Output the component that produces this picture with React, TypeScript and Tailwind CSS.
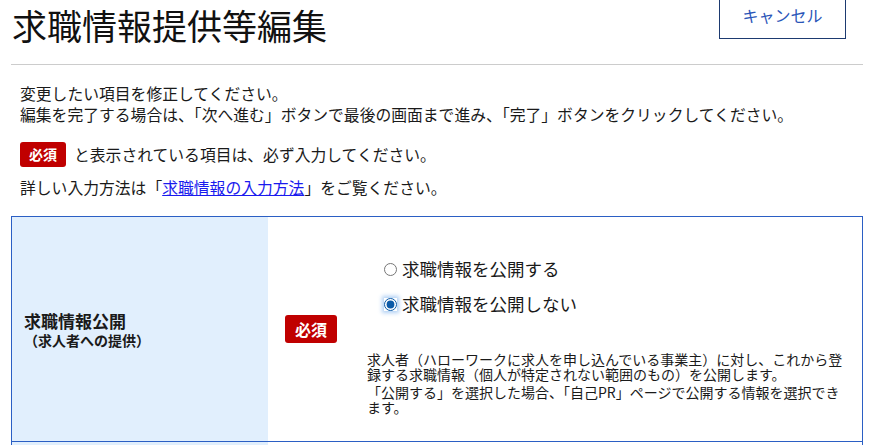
import React, { useState } from 'react';

const jp = { fontFamily: '"Noto Sans CJK JP", "Noto Sans", sans-serif' };

function RequiredBadge({ big }: { big?: boolean }) {
  return (
    <span
      className={
        big
          ? 'inline-flex h-[28px] w-[52px] items-center justify-center rounded-[3px] bg-[#c00000] text-[16px] font-bold text-white'
          : 'inline-flex h-[25px] w-[46px] items-center justify-center rounded-[3px] bg-[#c00000] text-[14px] font-bold text-white'
      }
    >
      必須
    </span>
  );
}

export default function App() {
  const [publish, setPublish] = useState('no');

  return (
    <div className="min-h-[445px] bg-white text-[#1a1a1a]" style={jp}>
      {/* header */}
      <div className="ml-[11px] mr-[16px] flex items-start justify-between border-b border-[#cccccc] pb-[16px]">
        <h1 className="pl-[1px] pt-[2px] text-[35px] leading-[46px] font-normal text-[#111]">
          求職情報提供等編集
        </h1>
        <button className="mr-[17px] -mt-[10px] h-[49px] w-[127px] border border-[#1d3a70] bg-white text-[16px] text-[#2a55b8]">
          キャンセル
        </button>
      </div>

      {/* intro */}
      <div className="px-[20px] pt-[18px] text-[15.8px] leading-[21px]">
        <p>変更したい項目を修正してください。</p>
        <p>編集を完了する場合は、「次へ進む」ボタンで最後の画面まで進み、「完了」ボタンをクリックしてください。</p>
        <div className="mt-[17px] flex items-center gap-[8px]">
          <RequiredBadge />
          <span>と表示されている項目は、必ず入力してください。</span>
        </div>
        <p className="mt-[10px]">
          詳しい入力方法は「
          <a href="#" className="text-[#1a1aee] underline">
            求職情報の入力方法
          </a>
          」をご覧ください。
        </p>
      </div>

      {/* form table */}
      <div className="ml-[11px] mr-[16px] mt-[18px] border-x border-t border-[#2b5fc4]">
        <div className="flex border-b border-[#2b5fc4]">
          <div className="flex w-[256px] shrink-0 flex-col justify-center bg-[#e1effd] pl-[12px] font-bold">
            <span className="text-[17px] leading-[20px]">求職情報公開</span>
            <span className="mt-[1px] text-[14px] leading-[16px]">（求人者への提供）</span>
          </div>
          <div className="flex w-[99px] shrink-0 items-center pl-[17px]">
            <RequiredBadge big />
          </div>
          <div className="flex-1 pb-[26px] pr-[14px] pt-[40px]">
            <div className="flex flex-col gap-[11px] pl-[17px] text-[17.5px] leading-[24px]">
              <label className="flex items-center gap-[5px]">
                <input
                  type="radio"
                  name="pub"
                  checked={publish === 'yes'}
                  onChange={() => setPublish('yes')}
                  className="m-0 h-[13px] w-[13px] accent-[#0b5aa8]"
                />
                求職情報を公開する
              </label>
              <label className="flex items-center gap-[5px]">
                <input
                  type="radio"
                  name="pub"
                  checked={publish === 'no'}
                  onChange={() => setPublish('no')}
                  className="m-0 h-[13px] w-[13px] accent-[#0b5aa8] shadow-[0_0_4px_2px_rgba(80,150,230,0.45)]"
                />
                求職情報を公開しない
              </label>
            </div>
            <div className="mt-[36px] text-[14px] leading-[15px]">
              <p>
                求人者（ハローワークに求人を申し込んでいる事業主）に対し、これから登録する求職情報（個人が特定されない範囲のもの）を公開します。
              </p>
              <p className="mt-[3px]">
                「公開する」を選択した場合、「自己PR」ページで公開する情報を選択できます。
              </p>
            </div>
          </div>
        </div>
        <div className="flex h-[20px]">
          <div className="w-[256px] bg-[#e1effd]" />
        </div>
      </div>
    </div>
  );
}
